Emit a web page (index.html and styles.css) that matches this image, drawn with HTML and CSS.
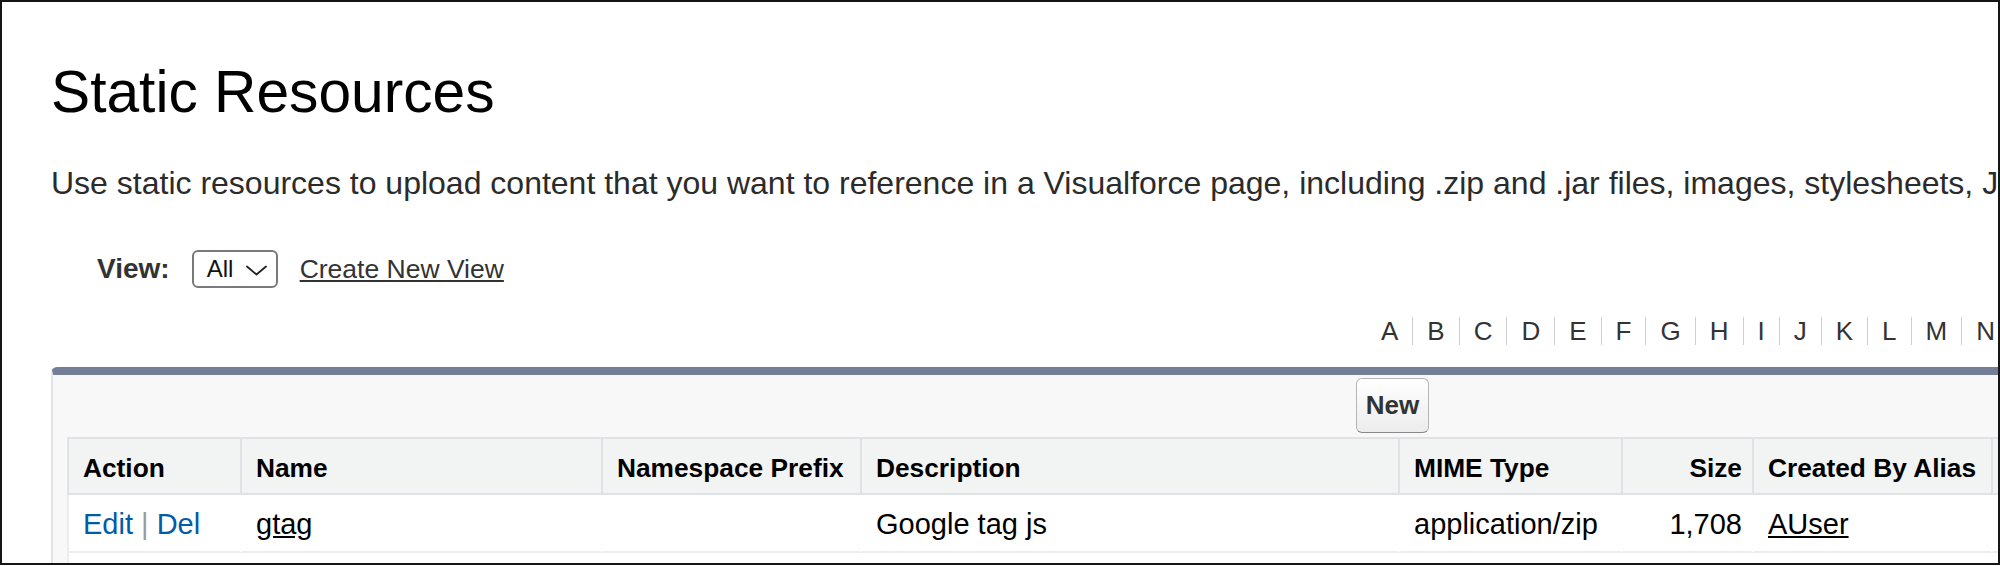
FILE: index.html
```html
<!DOCTYPE html>
<html lang="en">
<head>
<meta charset="utf-8">
<title>Static Resources</title>
<link rel="stylesheet" href="styles.css">
</head>
<body>
<div class="frame">
  <div class="page">
    <h1 class="title">Static Resources</h1>
    <p class="desc">Use static resources to upload content that you want to reference in a Visualforce page, including .zip and .jar files, images, stylesheets, JavaScript, and other files.</p>

    <div class="view-row">
      <span class="view-label">View:</span>
      <span class="select">
        <span class="select-text">All</span>
        <svg class="chev" width="21" height="11" viewBox="0 0 21 11"><polyline points="1,1.5 10.5,9.5 20,1.5" fill="none" stroke="#222" stroke-width="1.8" stroke-linejoin="round" stroke-linecap="round"/></svg>
      </span>
      <a class="view-link" href="#">Create New View</a>
    </div>

    <div class="rolodex">
      <span class="letter">A</span><span class="letter">B</span><span class="letter">C</span><span class="letter">D</span><span class="letter">E</span><span class="letter">F</span><span class="letter">G</span><span class="letter">H</span><span class="letter">I</span><span class="letter">J</span><span class="letter">K</span><span class="letter">L</span><span class="letter">M</span><span class="letter">N</span><span class="letter">O</span><span class="letter">P</span><span class="letter">Q</span><span class="letter">R</span>
    </div>

    <div class="panel">
      <div class="btn-row">
        <button class="btn" type="button">New</button>
      </div>
      <table class="list">
        <thead>
          <tr>
            <th class="c-action">Action</th>
            <th class="c-name">Name</th>
            <th class="c-ns">Namespace Prefix</th>
            <th class="c-desc">Description</th>
            <th class="c-mime">MIME Type</th>
            <th class="c-size num">Size</th>
            <th class="c-alias">Created By Alias</th>
            <th class="c-last">Last Modified Date</th>
          </tr>
        </thead>
        <tbody>
          <tr>
            <td class="first"><a class="act" href="#">Edit</a> <span class="sep">|</span> <a class="act" href="#">Del</a></td>
            <td><a class="dl" href="#">gtag</a></td>
            <td></td>
            <td>Google tag js</td>
            <td>application/zip</td>
            <td class="num">1,708</td>
            <td><a class="dl" href="#">AUser</a></td>
            <td></td>
          </tr>
          <tr class="empty">
            <td class="first"></td><td></td><td></td><td></td><td></td><td></td><td></td><td></td>
          </tr>
        </tbody>
      </table>
    </div>
  </div>
</div>
</body>
</html>
```

FILE: styles.css
```css
html, body {
  margin: 0;
  padding: 0;
  background: #fff;
}

.frame {
  width: 2000px;
  height: 565px;
  box-sizing: border-box;
  border: 2px solid #151515;
  overflow: hidden;
  background: #fff;
  font-family: "Liberation Sans", Arial, Helvetica, sans-serif;
}

.page {
  width: 2700px;
  padding: 56px 0 0 49px;
}

.title {
  margin: 0;
  font-size: 58.7px;
  line-height: 68px;
  font-weight: 400;
  color: #000;
}

.desc {
  margin: 37px 0 0;
  font-size: 32px;
  line-height: 40px;
  color: #2b2b2b;
  white-space: nowrap;
}

.view-row {
  display: flex;
  align-items: center;
  height: 38px;
  margin-top: 47px;
  padding-left: 46px;
}

.view-label {
  font-weight: bold;
  font-size: 28px;
  line-height: 32px;
  color: #333;
  margin-right: 22px;
}

.select {
  display: flex;
  align-items: center;
  box-sizing: border-box;
  height: 38px;
  width: 86px;
  padding: 0 9px 0 13px;
  border: 2px solid #7a7a7a;
  border-radius: 6px;
  background: #fff;
}

.select-text {
  font-size: 24px;
  line-height: 28px;
  color: #111;
}

.chev {
  margin-left: auto;
  margin-top: 2px;
}

.view-link {
  margin-left: 22px;
  font-size: 26.5px;
  line-height: 30px;
  color: #333;
  text-decoration: underline;
}

.rolodex {
  display: flex;
  margin-top: 29px;
  padding-left: 1316px;
  height: 28px;
}

.letter {
  padding: 0 14px;
  font-size: 26px;
  line-height: 28px;
  color: #333;
}

.letter + .letter {
  border-left: 1px solid #cfcfcf;
}

.panel {
  margin-top: 22px;
  border-top: 8px solid #747e96;
  border-left: 2px solid #e4e4e4;
  border-top-left-radius: 6px;
  background: #f8f8f8;
  padding-left: 14px;
}

.btn-row {
  display: flex;
  padding: 3px 0 4px 1289px;
}

.btn {
  box-sizing: border-box;
  height: 55px;
  width: 73px;
  padding: 0;
  margin: 0;
  font-family: "Liberation Sans", Arial, Helvetica, sans-serif;
  font-weight: bold;
  font-size: 26px;
  color: #333;
  background: linear-gradient(#ffffff, #ececec);
  border: 1px solid #b5b5b5;
  border-bottom-color: #8a8a8a;
  border-radius: 6px;
}

.list {
  border-collapse: separate;
  border-spacing: 0;
  table-layout: fixed;
  width: 2324px;
  background: #fff;
}

.list th,
.list td {
  box-sizing: border-box;
  text-align: left;
  white-space: nowrap;
  overflow: hidden;
  vertical-align: top;
}

.list th {
  background: #f2f3f3;
  border-top: 2px solid #e0e3e5;
  border-bottom: 2px solid #e0e3e5;
  border-left: 2px solid #e0e3e5;
  padding: 14px 10px 10px 14px;
  font-size: 26.3px;
  line-height: 30px;
  font-weight: bold;
  color: #000;
}

.list td {
  background: #fff;
  border-left: 2px solid transparent;
  border-bottom: 2px solid #ededed;
  padding: 12px 10px 10px 14px;
  font-size: 29px;
  line-height: 34px;
  color: #000;
  height: 58px;
}

.list td.first {
  border-left-color: #ededed;
}

.list .num {
  text-align: right;
}

.c-action { width: 173px; }
.c-name { width: 361px; }
.c-ns { width: 259px; }
.c-desc { width: 538px; }
.c-mime { width: 223px; }
.c-size { width: 131px; }
.c-alias { width: 239px; }
.c-last { width: 400px; }

.act {
  color: #015ba7;
  text-decoration: none;
}

.sep {
  color: #9a9a9a;
}

.dl {
  color: #000;
  text-decoration: underline;
}
```
